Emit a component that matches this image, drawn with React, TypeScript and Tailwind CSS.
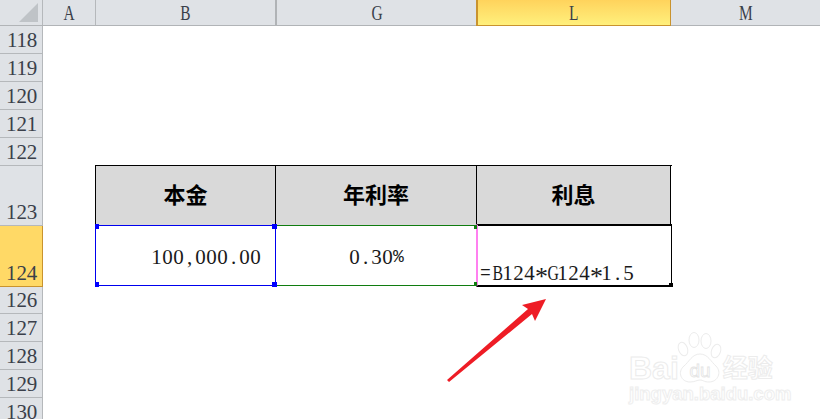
const serif = "font-['Liberation_Serif','Noto_Sans_CJK_SC',serif]";

const rows = [
  { n: "118", h: "h-[28px]" },
  { n: "119", h: "h-[28px]" },
  { n: "120", h: "h-[28px]" },
  { n: "121", h: "h-[28px]" },
  { n: "122", h: "h-[28px]" },
  { n: "123", h: "h-[60px]" },
  { n: "124", h: "h-[61px]", active: true },
  { n: "126", h: "h-[27px]" },
  { n: "127", h: "h-[28px]" },
  { n: "128", h: "h-[28px]" },
  { n: "129", h: "h-[28px]" },
  { n: "130", h: "h-[28px]" },
];

// the sheet font is half-width, every character takes the same box
function CellText({ text }: { text: string }) {
  return (
    <span className="inline-flex text-[#1a1a1a]">
      {text.split("").map((c, i) => {
        if (c === "%" || c === "=") {
          return (
            <span key={i} className="inline-block w-[11px] text-center font-['Liberation_Mono',monospace] text-[18px] leading-[22px]">
              {c}
            </span>
          );
        }
        if (c === "*") {
          return (
            <span key={i} className={`${serif} inline-block w-[11px] translate-y-[4px] text-center text-[26px] leading-[22px]`}>
              {c}
            </span>
          );
        }
        if (c === "B" || c === "G") {
          return (
            <span key={i} className={`${serif} inline-block w-[11px] scale-x-[0.75] text-center text-[21px] leading-[22px]`}>
              {c}
            </span>
          );
        }
        return (
          <span key={i} className={`${serif} inline-block w-[11px] text-center text-[21px] leading-[22px]`}>
            {c}
          </span>
        );
      })}
    </span>
  );
}

function ColHead({ label, className }: { label: string; className: string }) {
  return (
    <div className={`flex items-center justify-center ${className}`}>
      <span className={`${serif} inline-block scale-x-[0.7] text-[22px] leading-none text-[#3a3f4a]`}>{label}</span>
    </div>
  );
}

function Handle({ className }: { className: string }) {
  return <span className={`absolute z-10 ${className}`} />;
}

export default function App() {
  return (
    <div className="relative h-[419px] w-[820px] overflow-hidden bg-white">
      {/* column headers */}
      <div className="flex h-[26px] border-b border-[#b1b4b7] bg-[#dfe2e6]">
        <div className="relative w-[43px] border-r border-[#b5b8bb]">
          <svg className="absolute left-[18px] top-[2px]" width="21" height="21" viewBox="0 0 21 21">
            <polygon points="1,20 20,1 20,20" fill="#bfc3c7" />
          </svg>
        </div>
        <ColHead label="A" className="w-[53px] border-r border-[#b5b8bb]" />
        <ColHead label="B" className="w-[181px] border-r-2 border-[#b0b3b6]" />
        <ColHead label="G" className="w-[199px]" />
        <ColHead
          label="L"
          className="-mb-px w-[195px] border-b border-l-2 border-r border-[#c9932e] bg-gradient-to-b from-[#ffd35c] to-[#fff07c]"
        />
        <ColHead label="M" className="flex-1" />
      </div>

      <div className="flex">
        {/* row headers */}
        <div className="w-[43px] shrink-0">
          {rows.map((r) => (
            <div
              key={r.n}
              className={`flex items-end justify-end border-b border-r pb-[1px] pr-[5px] ${r.h} ${
                r.active ? "border-[#c9932e] bg-[#ffd966]" : "border-[#b5b8bb] bg-[#dfe2e6]"
              }`}
            >
              <span className={`${serif} text-[21px] leading-[24px] tracking-[-0.2px] text-[#3a3f4a]`}>{r.n}</span>
            </div>
          ))}
        </div>

        {/* sheet */}
        <div className="flex-1 pl-[52px] pt-[139px]">
          <div className="grid w-[577px] grid-cols-[180px_201px_195px] grid-rows-[60px_61px] border-l border-t border-black">
            <div className={`flex items-center justify-center border-b border-r border-black bg-[#d9d9d9] text-[22px] font-bold text-black ${serif}`}>
              本金
            </div>
            <div className={`flex items-center justify-center border-b border-r border-black bg-[#d9d9d9] text-[22px] font-bold text-black ${serif}`}>
              年利率
            </div>
            <div className={`mr-px flex items-center justify-center border-b border-r border-black bg-[#d9d9d9] text-[22px] font-bold text-black ${serif}`}>
              利息
            </div>

            <div className="relative -ml-px -mt-px mb-px flex items-center justify-end border border-[#0000ee] pr-[14px] pt-[2px]">
              <CellText text="100,000.00" />
              <Handle className="-left-px -top-[2px] h-[5px] w-[4px] bg-[#0000ff]" />
              <Handle className="-right-[2px] -top-[2px] h-[5px] w-[5px] bg-[#0000ff]" />
              <Handle className="-bottom-[2px] -left-px h-[5px] w-[4px] bg-[#0000ff]" />
              <Handle className="-bottom-[2px] -right-[2px] h-[5px] w-[5px] bg-[#0000ff]" />
            </div>
            <div className="relative -mt-px mb-px flex items-center justify-center border-b border-t border-[#107c10] pt-[2px]">
              <CellText text="0.30%" />
              <Handle className="-top-px right-0 h-[4px] w-[3px] bg-[#107c10]" />
              <Handle className="-bottom-px right-0 h-[4px] w-[3px] bg-[#107c10]" />
            </div>
            <div className="relative -ml-px -mt-[2px] flex items-end border-b-2 border-l-2 border-r border-t border-b-black border-l-[#ff80f0] border-r-black border-t-black pb-[1px] pl-[2px]">
              <CellText text="=B124*G124*1.5" />
              <Handle className="-bottom-[2px] -right-[2px] h-[4px] w-[4px] bg-black" />
            </div>
          </div>
        </div>
      </div>

      {/* red arrow */}
      <svg className="absolute left-[440px] top-[290px]" width="115" height="100" viewBox="440 290 115 100">
        <polygon points="447,380 528,309 522,305 546,299 535,321 532,314 449,382" fill="#ee1c25" />
      </svg>

      {/* watermark */}
      <div className="absolute left-[629px] top-[331px] w-[150px] whitespace-nowrap text-white">
        <div className="flex h-[53px] items-end">
          <span className="font-['Liberation_Sans',sans-serif] text-[32px] font-bold leading-[32px] [-webkit-text-stroke:1px_#ececec]">
            Bai
          </span>
          <svg className="-ml-[2px] shrink-0" width="46" height="52" viewBox="0 0 46 52" fill="none" stroke="#ececec">
            <ellipse cx="6" cy="17" rx="4.5" ry="7" transform="rotate(-20 6 17)" />
            <ellipse cx="17" cy="8" rx="5" ry="7.5" />
            <ellipse cx="29" cy="9" rx="5" ry="7.5" />
            <ellipse cx="39" cy="19" rx="4.5" ry="7" transform="rotate(20 39 19)" />
            <path d="M23 22 C31 22 34 30 39 34 C45 40 41 50 32 50 C27 50 26 48 23 48 C20 48 18 50 13 50 C4 50 0 40 7 34 C12 30 15 22 23 22 Z" />
            <text x="23" y="45" textAnchor="middle" fontSize="19" fontFamily="Liberation Sans" fill="#ffffff" stroke="#e4e4e4" strokeWidth="0.8">
              du
            </text>
          </svg>
          <span className="mb-[5px] shrink-0 font-['Noto_Sans_CJK_SC',sans-serif] text-[25px] font-bold leading-[26px] [-webkit-text-stroke:1px_#ececec]">
            经验
          </span>
        </div>
        <div className="font-['Liberation_Sans',sans-serif] text-[18.5px] font-bold leading-[20px] [-webkit-text-stroke:1px_#eeeeee]">
          jingyan.baidu.com
        </div>
      </div>
    </div>
  );
}
